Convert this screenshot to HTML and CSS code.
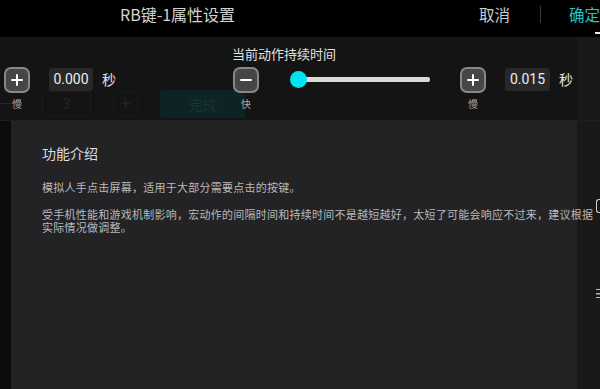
FILE: index.html
```html
<!DOCTYPE html>
<html lang="zh-CN">
<head>
<meta charset="utf-8">
<title>RB键-1属性设置</title>
<link rel="stylesheet" href="styles.css">
</head>
<body>
<div class="screen">
  <header class="header">
    <div class="title">RB键-1属性设置</div>
    <div class="actions">
      <span class="cancel">取消</span>
      <span class="divider"></span>
      <span class="confirm">确定</span>
    </div>
    <span class="edge-dash"></span>
  </header>

  <div class="stage">
    <section class="settings">
      <div class="ghost">
        <span class="ghost-dash"></span>
        <span class="ghost-box">3</span>
        <span class="ghost-plus">+</span>
        <span class="ghost-done">完成</span>
      </div>
      <div class="controls">
        <div class="caption">当前动作持续时间</div>
        <div class="row">
          <div class="step step-a">
            <span class="btn">
              <svg viewBox="0 0 12 12" width="12" height="12"><path d="M6 1v10M1 6h10" stroke="#fff" stroke-width="2" stroke-linecap="round"/></svg>
            </span>
            <span class="step-label">慢</span>
          </div>
          <span class="value value-a">0.000</span>
          <span class="unit">秒</span>
          <div class="step step-b">
            <span class="btn">
              <svg viewBox="0 0 12 12" width="12" height="12"><path d="M1 6h10" stroke="#fff" stroke-width="2" stroke-linecap="round"/></svg>
            </span>
            <span class="step-label">快</span>
          </div>
          <div class="slider">
            <span class="thumb"></span>
            <span class="track"></span>
          </div>
          <div class="step step-c">
            <span class="btn">
              <svg viewBox="0 0 12 12" width="12" height="12"><path d="M6 1v10M1 6h10" stroke="#fff" stroke-width="2" stroke-linecap="round"/></svg>
            </span>
            <span class="step-label">慢</span>
          </div>
          <span class="value value-b">0.015</span>
          <span class="unit">秒</span>
        </div>
      </div>
    </section>

    <section class="panel-row">
      <div class="panel">
        <h2 class="panel-title">功能介绍</h2>
        <p class="desc desc-1">模拟人手点击屏幕，适用于大部分需要点击的按键。</p>
        <p class="desc desc-2">受手机性能和游戏机制影响，宏动作的间隔时间和持续时间不是越短越好，太短了可能会响应不过来，建议根据实际情况做调整。</p>
      </div>
    </section>
    <span class="edge-bracket"></span>
    <span class="edge-lines"></span>
  </div>
</div>
</body>
</html>
```

FILE: styles.css
```css
* { box-sizing: border-box; }

html, body {
  margin: 0;
  padding: 0;
  background: #141414;
}

body {
  width: 600px;
  height: 389px;
  overflow: hidden;
  font-family: "Noto Sans CJK SC", "Noto Sans", Roboto, sans-serif;
}

.screen {
  position: relative;
  width: 600px;
  height: 389px;
  overflow: hidden;
  display: flex;
  flex-direction: column;
}

/* Header */
.header {
  position: relative;
  height: 37px;
  flex: none;
  background: #000;
  display: flex;
  align-items: flex-start;
  padding-left: 120px;
}

.title {
  height: 28px;
  line-height: 28px;
  font-size: 16px;
  color: #d2d2d2;
  white-space: nowrap;
}

.actions {
  margin-left: auto;
  height: 28px;
  display: flex;
  align-items: center;
  white-space: nowrap;
}

.cancel {
  font-size: 15.5px;
  line-height: 28px;
  color: #cdcdcd;
}

.divider {
  width: 1px;
  height: 17px;
  margin: 0 28px 0 30px;
  background: #3a3a3a;
}

.confirm {
  font-size: 15.5px;
  line-height: 28px;
  color: #1fc8c9;
}

.edge-dash {
  position: absolute;
  right: 0;
  top: 32px;
  width: 5px;
  height: 2px;
  background: #e8e8e8;
}

/* Stage */
.stage {
  position: relative;
  flex: 1;
  display: flex;
  flex-direction: column;
  background: linear-gradient(to right, #141414 577px, #19191a 577px);
}

.settings {
  height: 84px;
  flex: none;
  display: grid;
  border-bottom: 1px solid #1f1f1f;
}

.ghost, .controls {
  grid-area: 1 / 1;
}

.ghost {
  display: flex;
  align-items: flex-start;
  padding-top: 54px;
}

.ghost-dash {
  width: 13px;
  height: 1px;
  margin-top: 12px;
  background: #262626;
}

.ghost-box {
  width: 49px;
  height: 26px;
  margin-left: 29px;
  border: 1px solid #1b1b1b;
  border-radius: 3px;
  text-align: center;
  font-family: Roboto, sans-serif;
  font-size: 14px;
  line-height: 24px;
  color: #242424;
}

.ghost-plus {
  width: 25px;
  height: 26px;
  margin-left: 22px;
  border: 1px solid #1b1b1b;
  border-radius: 5px;
  text-align: center;
  font-family: Roboto, sans-serif;
  font-size: 18px;
  line-height: 23px;
  color: #222;
}

.ghost-done {
  width: 85px;
  height: 28px;
  margin-left: 22px;
  margin-top: -1px;
  background: #0e2323;
  border-radius: 3px;
  text-align: center;
  font-size: 14px;
  line-height: 28px;
  color: #183434;
}

.controls {
  display: flex;
  flex-direction: column;
  padding-top: 9px;
}

.caption {
  margin-left: 232px;
  font-size: 13px;
  line-height: 16px;
  color: #e2e2e2;
  white-space: nowrap;
}

.row {
  display: flex;
  align-items: flex-start;
  margin-top: 5px;
}

.step {
  width: 26px;
  display: flex;
  flex-direction: column;
  align-items: center;
}

.step-a { margin-left: 4px; }
.step-b { margin-left: 117px; }
.step-c { margin-left: 30px; }

.btn {
  width: 26px;
  height: 26px;
  border: 2px solid #878787;
  border-radius: 7px;
  background: #464646;
  display: flex;
  align-items: center;
  justify-content: center;
}

.btn svg { display: block; }

.step-label {
  margin-top: 5px;
  font-size: 10px;
  line-height: 12px;
  color: #a8a8a8;
}

.value {
  height: 23px;
  margin-top: 1px;
  border-radius: 3px;
  background: #282828;
  text-align: center;
  font-family: Roboto, "Noto Sans", sans-serif;
  font-size: 14px;
  line-height: 23px;
  color: #ececec;
}

.value-a { width: 44px; margin-left: 19px; }
.value-b { width: 45px; margin-left: 19px; }

.unit {
  margin-left: 9px;
  margin-top: 1px;
  font-size: 14px;
  line-height: 23px;
  color: #e6e6e6;
}

.slider {
  width: 140px;
  height: 17px;
  margin-left: 31px;
  margin-top: 4px;
  display: flex;
  align-items: center;
}

.thumb {
  position: relative;
  z-index: 1;
  flex: none;
  width: 17px;
  height: 17px;
  border-radius: 50%;
  background: #00e6f0;
}

.track {
  flex: 1;
  height: 5px;
  margin-left: -9px;
  border-radius: 2px;
  background: #d9d9d9;
}

/* Panel */
.panel-row {
  flex: 1;
  display: flex;
  background: linear-gradient(to right, #0c0c0e 11px, transparent 11px);
}

.panel {
  width: 566px;
  margin-left: 11px;
  background: #232325;
  padding: 22px 0 0 31px;
}

.panel-title {
  margin: 0;
  font-size: 14px;
  font-weight: normal;
  line-height: 20px;
  color: #dedede;
}

.desc {
  margin: 0;
  width: 556px;
  font-size: 11px;
  letter-spacing: 0.25px;
  line-height: 13.5px;
  color: #b9b9b9;
}

.desc-1 { margin-top: 18px; }
.desc-2 { margin-top: 13px; }

.edge-bracket {
  position: absolute;
  right: 0;
  top: 162px;
  width: 4px;
  height: 14px;
  border: 1.5px solid #d0d0d0;
  border-right: none;
  border-radius: 3px 0 0 3px;
}

.edge-lines {
  position: absolute;
  right: 0;
  top: 252px;
  width: 4px;
  height: 9px;
  border-top: 1.5px solid #bdbdbd;
  border-bottom: 1.5px solid #bdbdbd;
  background: linear-gradient(#bdbdbd, #bdbdbd) center / 100% 1.5px no-repeat;
}
```
